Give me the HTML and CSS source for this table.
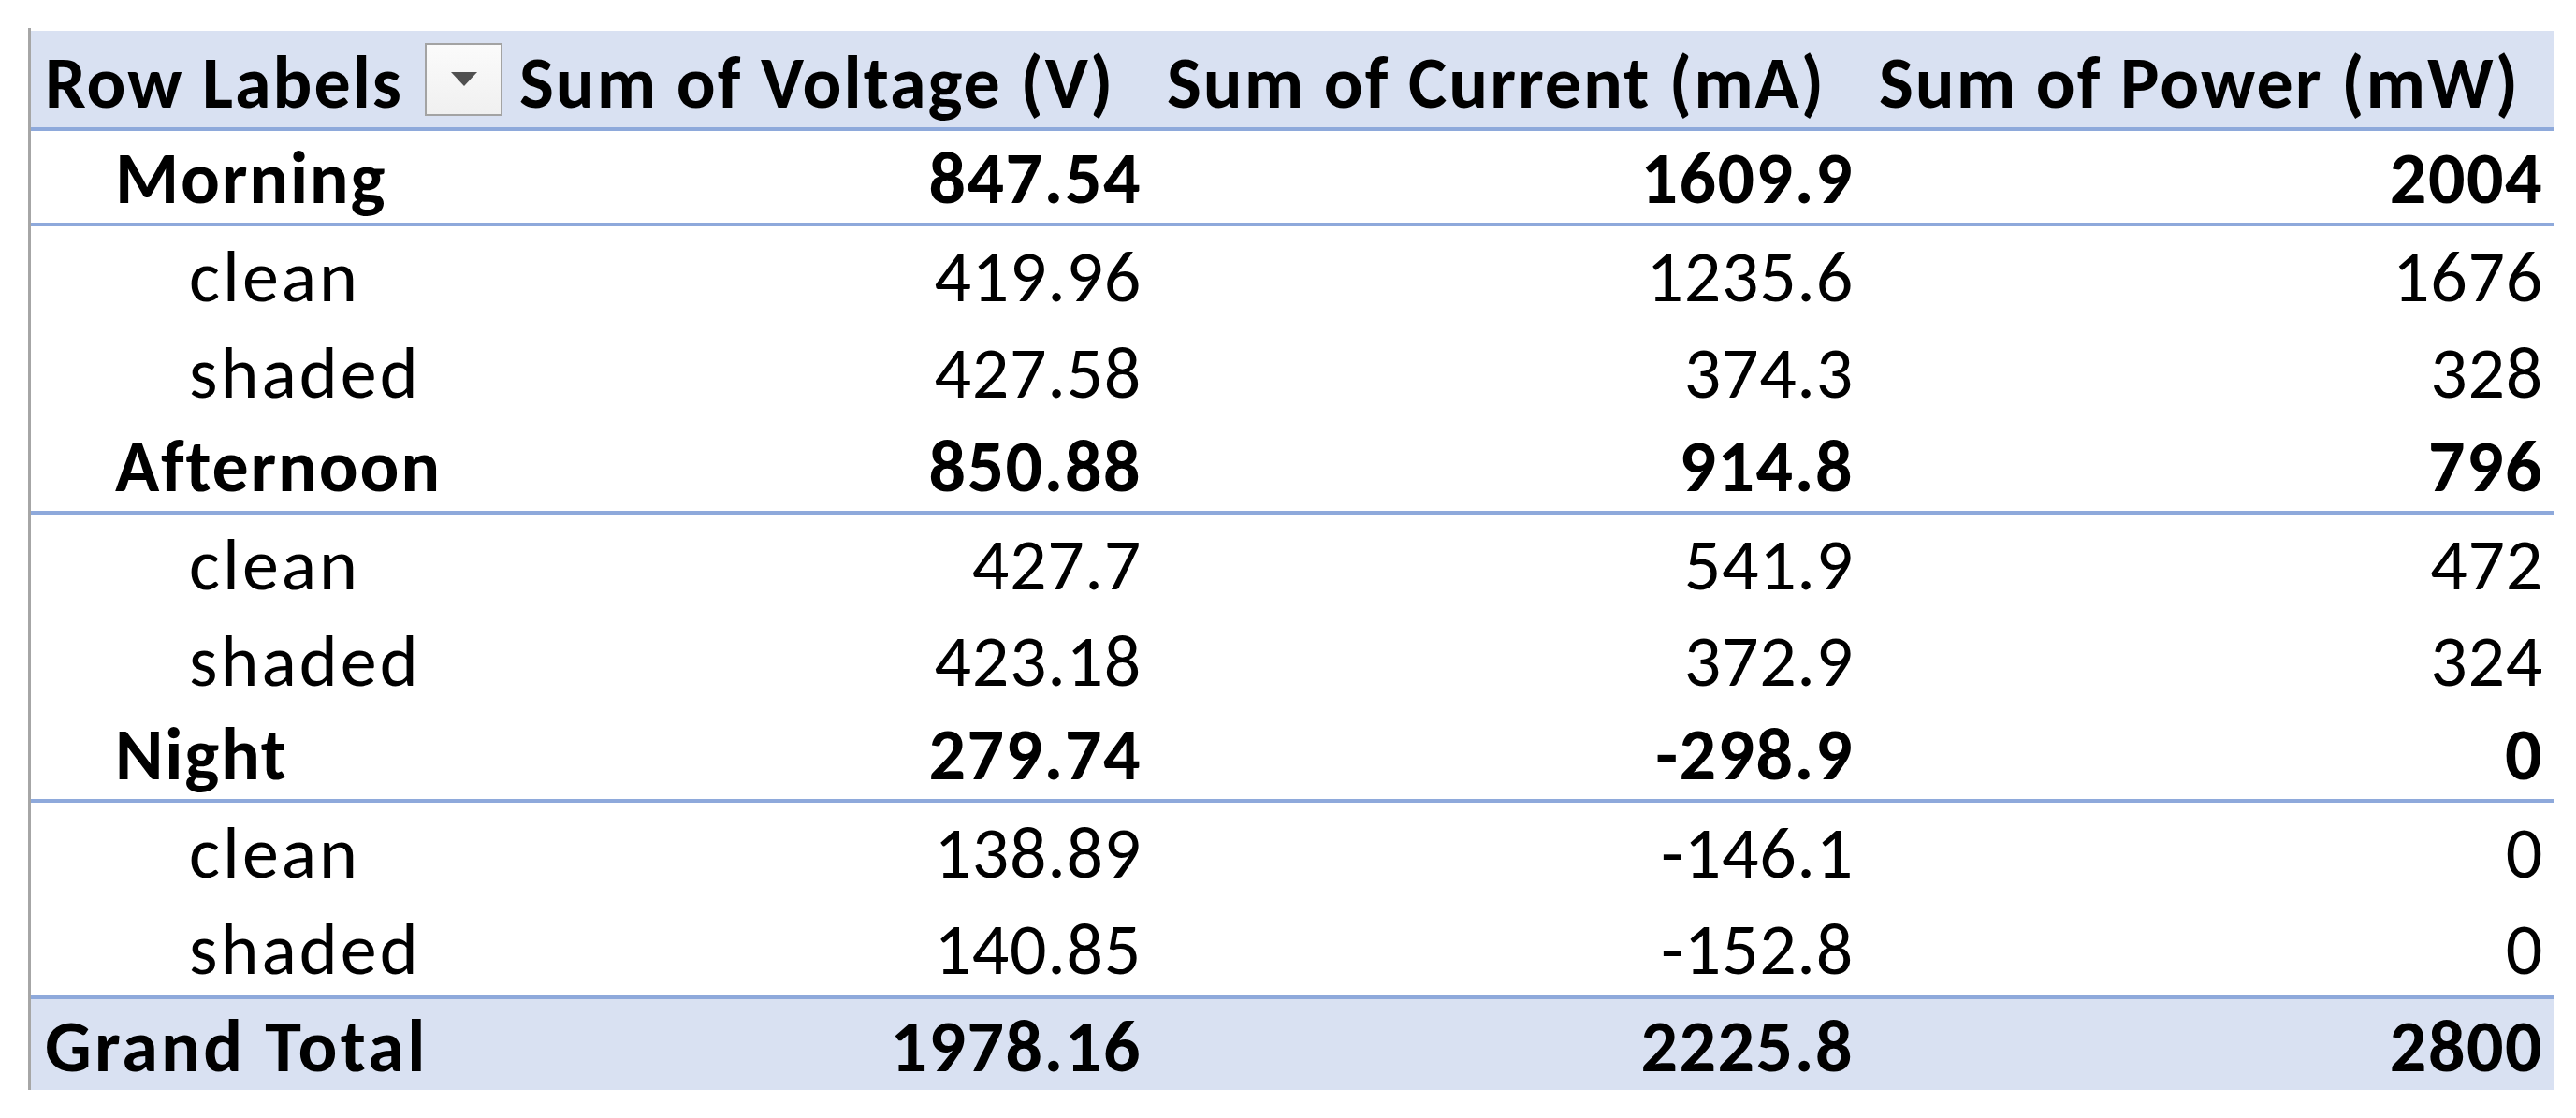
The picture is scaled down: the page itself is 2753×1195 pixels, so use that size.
FILE: index.html
```html
<!DOCTYPE html>
<html>
<head>
<meta charset="utf-8">
<link rel="stylesheet" href="styles.css">
</head>
<body>
<div class="sheet">
  <div class="pivot">
    <div class="cell hdr label-hdr"><span>Row Labels</span><span class="dd"><span class="tri"></span></span></div>
    <div class="cell hdr">Sum of Voltage (V)</div>
    <div class="cell hdr">Sum of Current (mA)</div>
    <div class="cell hdr">Sum of Power (mW)</div>

    <div class="cell grp lvl1">Morning</div>
    <div class="cell grp num">847.54</div>
    <div class="cell grp num">1609.9</div>
    <div class="cell grp num">2004</div>

    <div class="cell leaf lvl2">clean</div>
    <div class="cell leaf num">419.96</div>
    <div class="cell leaf num">1235.6</div>
    <div class="cell leaf num">1676</div>

    <div class="cell leaf lvl2">shaded</div>
    <div class="cell leaf num">427.58</div>
    <div class="cell leaf num">374.3</div>
    <div class="cell leaf num">328</div>

    <div class="cell grp lvl1">Afternoon</div>
    <div class="cell grp num">850.88</div>
    <div class="cell grp num">914.8</div>
    <div class="cell grp num">796</div>

    <div class="cell leaf lvl2">clean</div>
    <div class="cell leaf num">427.7</div>
    <div class="cell leaf num">541.9</div>
    <div class="cell leaf num">472</div>

    <div class="cell leaf lvl2">shaded</div>
    <div class="cell leaf num">423.18</div>
    <div class="cell leaf num">372.9</div>
    <div class="cell leaf num">324</div>

    <div class="cell grp lvl1">Night</div>
    <div class="cell grp num">279.74</div>
    <div class="cell grp num">-298.9</div>
    <div class="cell grp num">0</div>

    <div class="cell leaf lvl2">clean</div>
    <div class="cell leaf num">138.89</div>
    <div class="cell leaf num">-146.1</div>
    <div class="cell leaf num">0</div>

    <div class="cell leaf lvl2">shaded</div>
    <div class="cell leaf num">140.85</div>
    <div class="cell leaf num">-152.8</div>
    <div class="cell leaf num">0</div>

    <div class="cell total total-label">Grand Total</div>
    <div class="cell total num">1978.16</div>
    <div class="cell total num">2225.8</div>
    <div class="cell total num">2800</div>
  </div>
</div>
</body>
</html>
```
FILE: styles.css
```css
html, body {
  margin: 0;
  padding: 0;
  background: #ffffff;
}

body {
  width: 2753px;
  height: 1195px;
  overflow: hidden;
  font-family: Carlito, Calibri, Lato, "Open Sans", sans-serif;
  color: #000000;
}

.sheet {
  padding: 30px 0 0 30px;
}

.pivot {
  display: grid;
  grid-template-columns: 507px 692px 761px 737px;
  grid-auto-rows: auto;
  border-left: 3px solid #a6a6a6;
  padding-top: 3px;
  width: 2697px;
}

.cell {
  display: flex;
  align-items: center;
  font-size: 78px;
  line-height: 1;
  white-space: nowrap;
  box-sizing: border-box;
  padding: 4px 14px 0 15px;
  letter-spacing: 1.5px;
}

.num {
  justify-content: flex-end;
}

.hdr {
  height: 107px;
  background: #d9e1f2;
  border-bottom: 4px solid #8ea9db;
  font-weight: 700;
  padding-top: 8px;
  padding-left: 15px;
  letter-spacing: 2px;
}

.label-hdr {
  justify-content: space-between;
  padding-right: 3px;
}

.dd {
  width: 83px;
  height: 78px;
  box-sizing: border-box;
  border: 2px solid #a3a3a3;
  background: linear-gradient(#fbfbfb, #f0f0f0);
  display: flex;
  align-items: center;
  justify-content: center;
  margin-top: -8px;
}

.tri {
  width: 0;
  height: 0;
  border-left: 14px solid transparent;
  border-right: 14px solid transparent;
  border-top: 15px solid #505050;
}

.grp {
  height: 102px;
  border-bottom: 4px solid #8ea9db;
  font-weight: 700;
}

.grp.lvl1 {
  letter-spacing: 1.8px;
}

.leaf {
  height: 103px;
  font-weight: 400;
  letter-spacing: 3px;
}

.leaf.num {
  letter-spacing: 0.7px;
}

.lvl1 {
  padding-left: 90px;
}

.lvl2 {
  padding-left: 169px;
}

.total {
  height: 101px;
  background: #d9e1f2;
  border-top: 4px solid #8ea9db;
  font-weight: 700;
}

.total-label {
  letter-spacing: 3.3px;
}

.grp.num, .leaf.num, .total.num {
  padding-right: 12px;
}
```
